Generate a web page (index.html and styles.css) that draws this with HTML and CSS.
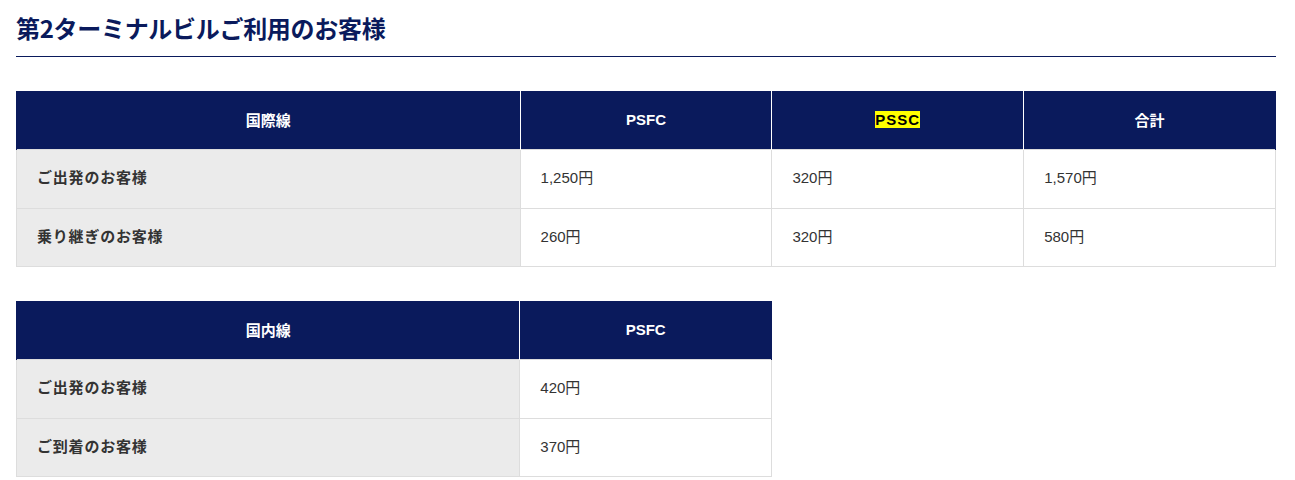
FILE: index.html
```html
<!DOCTYPE html>
<html lang="ja">
<head>
<meta charset="utf-8">
<title>第2ターミナルビルご利用のお客様</title>
<link rel="stylesheet" href="styles.css">
</head>
<body>
<div class="page">
  <h2 class="title">第2ターミナルビルご利用のお客様</h2>
  <table class="fee fee-wide">
    <colgroup><col class="c-label"><col class="c-val"><col class="c-val"><col class="c-val"></colgroup>
    <thead>
      <tr><th>国際線</th><th>PSFC</th><th><span class="hl">PSSC</span></th><th>合計</th></tr>
    </thead>
    <tbody>
      <tr><td class="label">ご出発のお客様</td><td>1,250円</td><td>320円</td><td>1,570円</td></tr>
      <tr><td class="label">乗り継ぎのお客様</td><td>260円</td><td>320円</td><td>580円</td></tr>
    </tbody>
  </table>
  <table class="fee fee-narrow">
    <colgroup><col class="c-label2"><col class="c-val2"></colgroup>
    <thead>
      <tr><th>国内線</th><th>PSFC</th></tr>
    </thead>
    <tbody>
      <tr><td class="label">ご出発のお客様</td><td>420円</td></tr>
      <tr><td class="label">ご到着のお客様</td><td>370円</td></tr>
    </tbody>
  </table>
</div>
</body>
</html>
```
FILE: styles.css
```css
html, body {
  margin: 0;
  padding: 0;
  background: #fff;
}
body {
  font-family: "Liberation Sans", "Noto Sans CJK JP", sans-serif;
  color: #333;
}
.page {
  padding: 0 19px 0 16px;
}
.title {
  margin: 0;
  padding: 10px 0 11px;
  font-family: "Noto Sans CJK JP", sans-serif;
  font-size: 24px;
  line-height: 35px;
  font-weight: 700;
  letter-spacing: -0.3px;
  color: #0a1a5c;
  border-bottom: 1px solid #0a1a5c;
}
.fee {
  border-collapse: collapse;
  table-layout: fixed;
  margin-top: 34px;
  font-size: 15px;
}
.fee-wide { width: 100%; }
.fee-narrow { width: 60%; }
.c-label { width: 40%; }
.c-val { width: 20%; }
.c-label2 { width: 66.666%; }
.c-val2 { width: 33.333%; }
.fee th {
  background: #0a1a5c;
  color: #fff;
  font-weight: 700;
  height: 56px;
  padding: 0 0 2px;
  text-align: center;
  border-left: 1px solid #fff;
  border-right: 1px solid #fff;
}
.fee th:first-child { border-left: 1px solid #0a1a5c; }
.fee th:last-child { border-right: 1px solid #0a1a5c; }
.fee td {
  height: 53.5px;
  padding: 0 20px 4px;
  border: 1px solid #dddddd;
  background: #fff;
  text-align: left;
}
.fee td.label {
  background: #ebebeb;
  font-weight: 700;
  font-family: "Noto Sans CJK JP", sans-serif;
  letter-spacing: 0.8px;
}
.hl {
  background: #ffff00;
  color: #000;
  letter-spacing: 1px;
}
```
